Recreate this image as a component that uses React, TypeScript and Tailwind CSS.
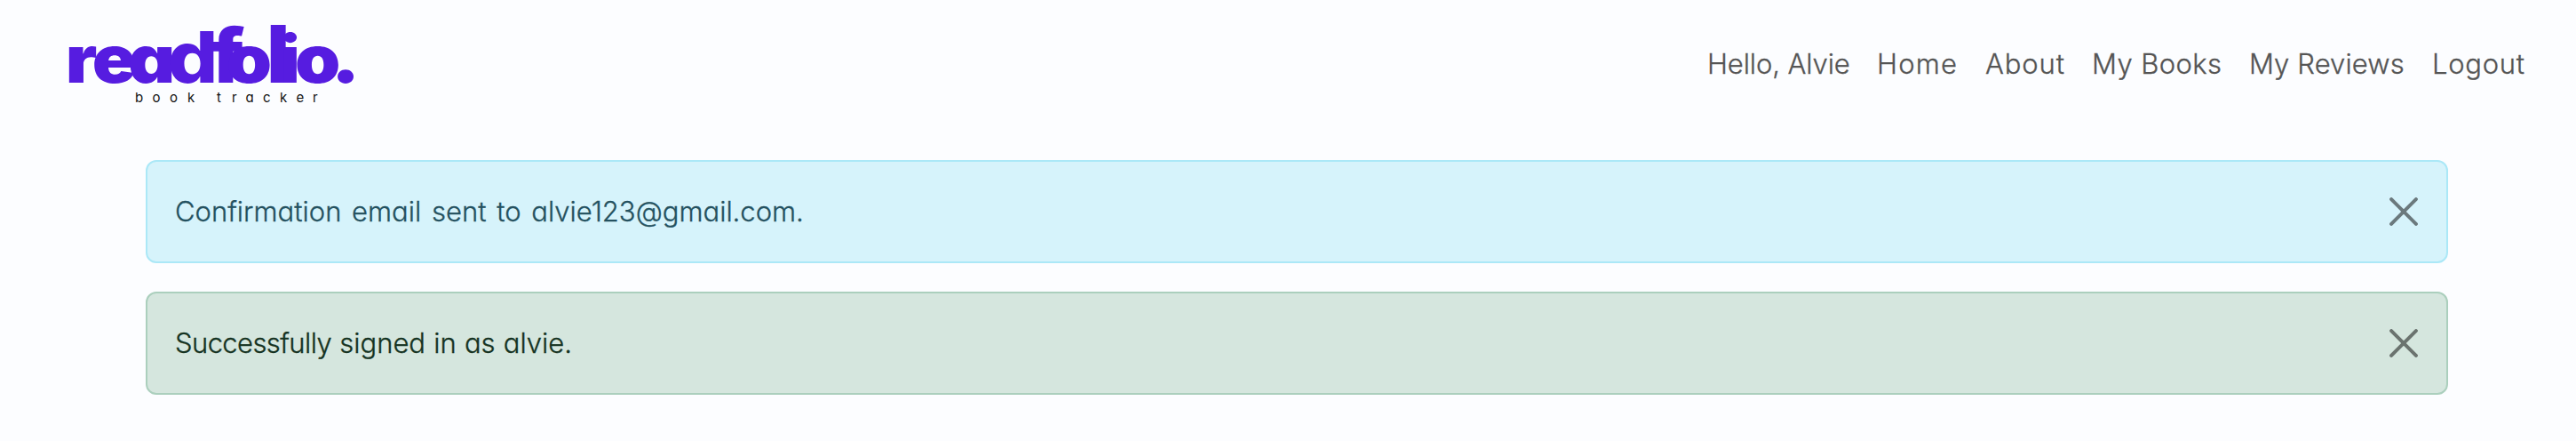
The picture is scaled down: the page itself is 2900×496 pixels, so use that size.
const navItems = [
  { label: "Hello, Alvie", cls: "w-[191px] tracking-[-0.1px]" },
  { label: "Home", cls: "w-[122px] tracking-[1.2px]" },
  { label: "About", cls: "w-[120px] tracking-[0.9px]" },
  { label: "My Books", cls: "w-[177px] tracking-[0.4px]" },
  { label: "My Reviews", cls: "w-[206px] tracking-[0.1px]" },
  { label: "Logout", cls: "w-[106px] tracking-[0.7px]" },
];

function Logo() {
  return (
    <svg width="340" height="125" viewBox="70 0 340 125" role="img" aria-label="readfolio. book tracker">
      <text
        transform="scale(1.11 1)"
        y="93.5"
        x="66.4 93.5 130 170 213.4 229.5 269.5 284 299 335.6"
        fontSize="74"
        fill="#561ce0"
        className="font-[Inter] font-black [font-feature-settings:'cv11']"
      >
        rea
        <tspan fontSize="80" className="font-extrabold">d</tspan>
        <tspan fontSize="85" className="font-extrabold">f</tspan>
        o
        <tspan fontSize="89" className="font-extrabold">l</tspan>
        <tspan className="font-extrabold">i</tspan>
        o
        <tspan fontSize="80">.</tspan>
      </text>
      <text
        y="115"
        x="152 171.5 191 211 225 244 261 276.5 296 315 333.5 352"
        fontSize="15"
        fill="#111111"
        className="font-[Inter] font-normal [font-feature-settings:'cv11']"
      >
        book tracker
      </text>
    </svg>
  );
}

function CloseButton({ cls }: { cls: string }) {
  return (
    <button aria-label="Close" className={cls}>
      <svg width="32" height="32" viewBox="0 0 32 32" fill="none" stroke="currentColor" strokeWidth="4" strokeLinecap="round">
        <path d="M2.1 2.1 29.9 29.9M29.9 2.1 2.1 29.9" />
      </svg>
    </button>
  );
}

export default function App() {
  return (
    <div className="h-[496px] w-[2900px] bg-[#fcfdff] font-[Inter,sans-serif] text-[31px] font-light [-webkit-text-stroke:0.3px] [font-feature-settings:'cv11']">
      <header className="flex h-[148px] items-start justify-between pr-[56px] pl-[70px]">
        <Logo />
        <nav className="flex pt-[48px] leading-[48px] text-[#555555]">
          {navItems.map((item) => (
            <a key={item.label} href="#" className={`whitespace-nowrap ${item.cls}`}>
              {item.label}
            </a>
          ))}
        </nav>
      </header>
      <main className="flex flex-col gap-8 pt-8 pr-36 pl-[164px]">
        <div className="flex h-[116px] items-center justify-between rounded-xl border-2 border-[#abe8f7] bg-[#d6f3fb] pr-8 pl-[31px] text-[#24515f]">
          <span className="[word-spacing:3px]">Confirmation email sent to alvie123@gmail.com.</span>
          <CloseButton cls="text-[#6b797d]" />
        </div>
        <div className="flex h-[116px] items-center justify-between rounded-xl border-2 border-[#abcfbd] bg-[#d5e6de] pr-8 pl-[31px] text-[#153322]">
          <span className="[word-spacing:0.5px]">
            <span className="tracking-[-0.6px]">Successfully</span> signed in as alvie.
          </span>
          <CloseButton cls="text-[#6b736f]" />
        </div>
      </main>
    </div>
  );
}
